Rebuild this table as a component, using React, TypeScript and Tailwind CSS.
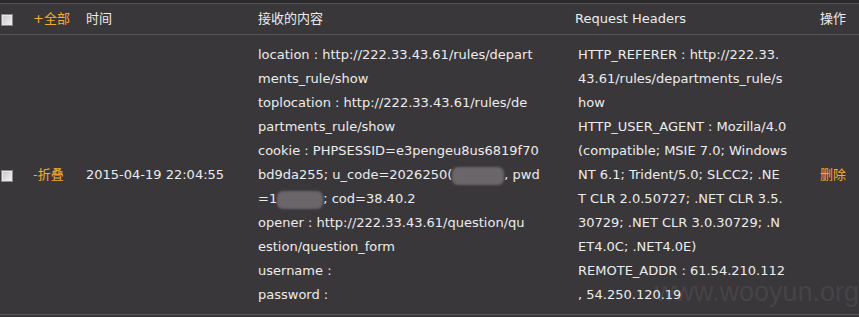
import React from 'react'

const Check = () => (
  <span className='inline-block w-[12px] h-[12px] border border-[#8a8a8a] bg-gradient-to-br from-[#c4c4c4] to-[#f4f4f4] shadow-[inset_0_0_0_1px_#e8e8e8] align-middle' />
)

const Blur = ({ w }: { w: number }) => (
  <span
    className='inline-block h-[18px] align-middle bg-[#6a6669] rounded-[6px] blur-[1px]'
    style={{ width: w }}
  />
)

const contentLines: React.ReactNode[] = [
  'location : http://222.33.43.61/rules/depart',
  'ments_rule/show',
  'toplocation : http://222.33.43.61/rules/de',
  'partments_rule/show',
  'cookie : PHPSESSID=e3pengeu8us6819f70',
  <>bd9da255; u_code=2026250(<Blur w={52} />, pwd</>,
  <>=1<Blur w={46} />; cod=38.40.2</>,
  'opener : http://222.33.43.61/question/qu',
  'estion/question_form',
  'username : ',
  'password : ',
]

const headerLines = [
  'HTTP_REFERER : http://222.33.',
  '43.61/rules/departments_rule/s',
  'how',
  'HTTP_USER_AGENT : Mozilla/4.0',
  '(compatible; MSIE 7.0; Windows',
  'NT 6.1; Trident/5.0; SLCC2; .NE',
  'T CLR 2.0.50727; .NET CLR 3.5.',
  '30729; .NET CLR 3.0.30729; .N',
  'ET4.0C; .NET4.0E)',
  'REMOTE_ADDR : 61.54.210.112',
  ', 54.250.120.19',
]

export default function App() {
  return (
    <div className='relative w-[859px] h-[317px] overflow-hidden bg-[#3a373b] text-[#ececec] text-[13px] font-["DejaVu_Sans","Noto_Sans_CJK_SC",sans-serif]'>
      <div className='h-[4px] bg-[#2b292c] border-b border-[#555257]' />

      {/* header */}
      <div className='flex h-[31px] items-center border-b border-[#5a575c]'>
        <div className='w-[28px] pl-[1px]'><Check /></div>
        <div className='w-[52px] pl-[5px] text-[#f2ae2e]'>+全部</div>
        <div className='w-[172px] pl-[6px]'>时间</div>
        <div className='w-[320px] pl-[6px]'>接收的内容</div>
        <div className='w-[242px] pl-[3px]'>Request Headers</div>
        <div className='flex-1 pl-[6px]'>操作</div>
      </div>

      {/* row */}
      <div className='flex items-center pt-[8px] pb-[7px] border-b border-[#5a575c]'>
        <div className='w-[28px] pl-[1px]'><Check /></div>
        <div className='w-[52px] pl-[5px] text-[#f2ae2e]'>-折叠</div>
        <div className='w-[172px] pl-[6px] whitespace-nowrap'>2015-04-19 22:04:55</div>
        <div className='w-[320px] pl-[6px] leading-[24px]'>
          {contentLines.map((l, i) => (
            <div key={i} className='whitespace-pre'>{l}</div>
          ))}
        </div>
        <div className='w-[242px] pl-[6px] leading-[24px]'>
          {headerLines.map((l, i) => (
            <div key={i} className='whitespace-pre'>{l}</div>
          ))}
        </div>
        <div className='flex-1 pl-[6px] text-[#f2ae2e]'>删除</div>
      </div>

      {/* watermark */}
      <div className='absolute left-[655px] top-[272px] text-[27px] text-white/[0.08] font-["Liberation_Sans",sans-serif] whitespace-nowrap pointer-events-none'>
        www.wooyun.org
      </div>
    </div>
  )
}
